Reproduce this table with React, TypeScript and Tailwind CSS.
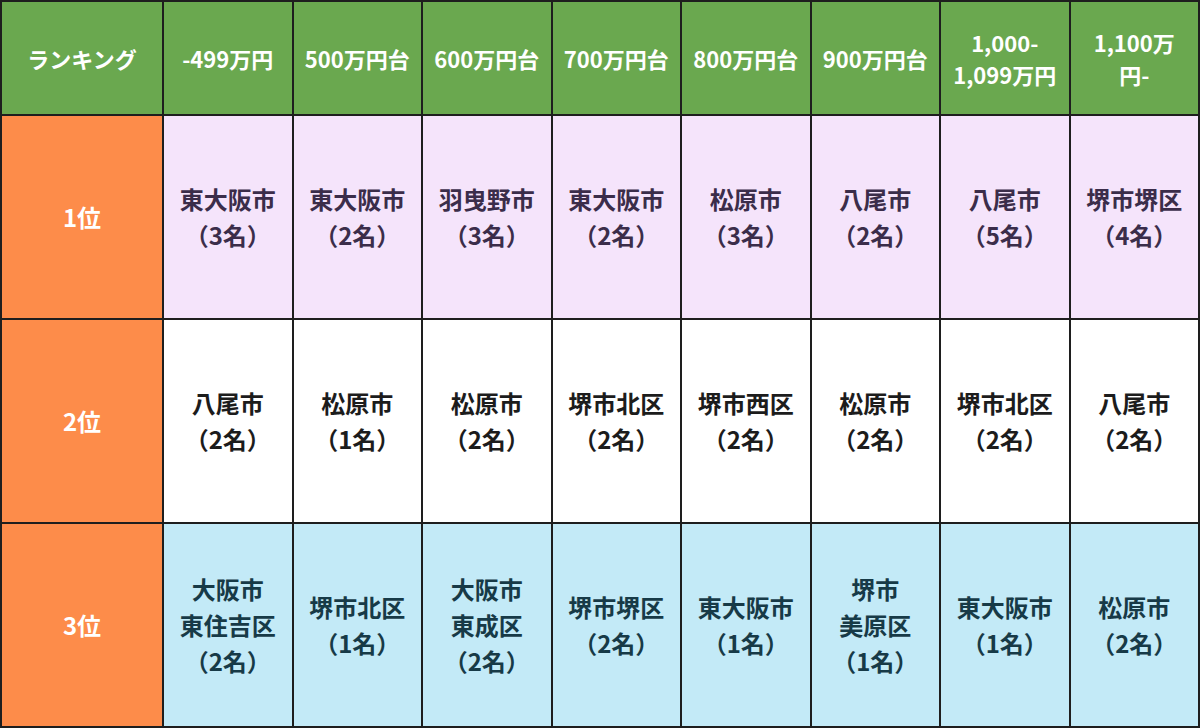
const headers = [
  "ランキング",
  "-499万円",
  "500万円台",
  "600万円台",
  "700万円台",
  "800万円台",
  "900万円台",
  "1,000-\n1,099万円",
  "1,100万\n円-",
];

const rows: { label: string; cells: string[] }[] = [
  {
    label: "1位",
    cells: [
      "東大阪市\n（3名）",
      "東大阪市\n（2名）",
      "羽曳野市\n（3名）",
      "東大阪市\n（2名）",
      "松原市\n（3名）",
      "八尾市\n（2名）",
      "八尾市\n（5名）",
      "堺市堺区\n（4名）",
    ],
  },
  {
    label: "2位",
    cells: [
      "八尾市\n（2名）",
      "松原市\n（1名）",
      "松原市\n（2名）",
      "堺市北区\n（2名）",
      "堺市西区\n（2名）",
      "松原市\n（2名）",
      "堺市北区\n（2名）",
      "八尾市\n（2名）",
    ],
  },
  {
    label: "3位",
    cells: [
      "大阪市\n東住吉区\n（2名）",
      "堺市北区\n（1名）",
      "大阪市\n東成区\n（2名）",
      "堺市堺区\n（2名）",
      "東大阪市\n（1名）",
      "堺市\n美原区\n（1名）",
      "東大阪市\n（1名）",
      "松原市\n（2名）",
    ],
  },
];

const rowStyle = [
  "bg-[#f5e4fb] text-[#3b2d4a]",
  "bg-white text-[#1c1c1c]",
  "bg-[#c3eaf7] text-[#173a47]",
];

function Lines({ text }: { text: string }) {
  return (
    <>
      {text.split("\n").map((line, i) => (
        <span key={i} className="block">
          {line}
        </span>
      ))}
    </>
  );
}

export default function App() {
  return (
    <div
      className="w-[1200px] h-[728px] bg-[#1e1e1e] p-[2px] grid grid-cols-[160px_repeat(8,1fr)] grid-rows-[112px_repeat(3,1fr)] gap-[2px] font-bold"
      style={{ fontFamily: '"Noto Sans CJK JP", "Noto Sans", sans-serif' }}
    >
      {headers.map((h, i) => (
        <div
          key={i}
          className="bg-[#6aa84f] text-white text-[22px] leading-[32px] flex flex-col items-center justify-center text-center"
        >
          <Lines text={h} />
        </div>
      ))}
      {rows.map((row, r) => (
        <div key={r} className="contents">
          <div className="bg-[#fd8c4a] text-white text-[24px] flex items-center justify-center">
            {row.label}
          </div>
          {row.cells.map((c, i) => (
            <div
              key={i}
              className={`${rowStyle[r]} text-[24px] leading-[36px] flex flex-col items-center justify-center text-center`}
            >
              <Lines text={c} />
            </div>
          ))}
        </div>
      ))}
    </div>
  );
}
